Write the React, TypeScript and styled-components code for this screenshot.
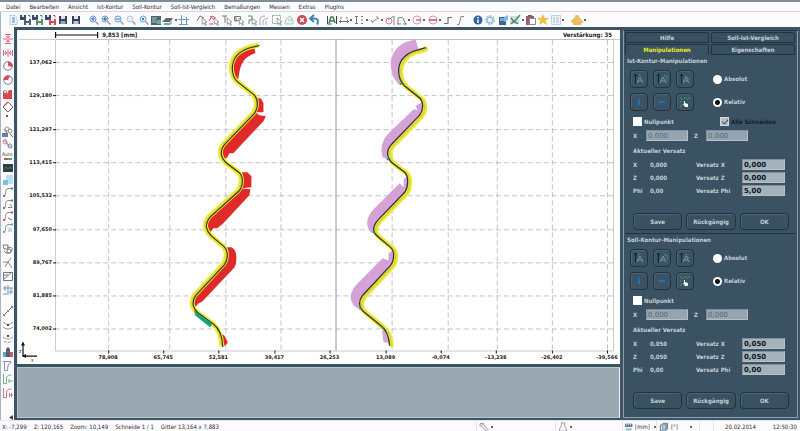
import React, { ReactNode } from "react";
import styled, { createGlobalStyle } from "styled-components";

const slate = "#3d5464";
const slateDark = "#1f3442";

const GlobalStyle = createGlobalStyle`
  * { box-sizing: border-box; }
  body {
    margin: 0;
    font-family: "DejaVu Sans Condensed", "DejaVu Sans", sans-serif;
    font-size: 6px;
    color: #2c2c30;
  }
  button, input { font: inherit; color: inherit; margin: 0; padding: 0; }
`;

const Window = styled.div`
  display: flex;
  flex-direction: column;
  min-height: 100vh;
  background: #fbfbfd;
`;

const MenuBar = styled.nav`
  display: flex;
  align-items: center;
  gap: 9px;
  height: 12px;
  padding: 0 6px;
  border-top: 2px solid #7f8d9b;
  border-bottom: 1px solid #d5d6dc;
  flex: none;
`;

const MenuItem = styled.button`
  border: 0;
  background: none;
  line-height: 8px;
`;

const ToolBar = styled.div`
  display: flex;
  align-items: center;
  gap: 6px;
  height: 15px;
  padding: 0 6px;
  border-left: 1px solid #a9b3c4;
  flex: none;
`;

const ToolGroup = styled.div<{ $w: number }>`
  display: flex;
  align-items: center;
  justify-content: space-between;
  width: ${(p) => p.$w}px;
  position: relative;
  & + &::before {
    content: "";
    position: absolute;
    left: -3px;
    height: 9px;
    border-left: 1px solid #dcdde3;
  }
`;

const IconButton = styled.button`
  display: flex;
  width: 12px;
  height: 12px;
  border: 0;
  background: none;
  opacity: 0.88;
  flex: none;
`;

const Dot = styled.span`
  width: 3px;
  &::after {
    content: "";
    display: block;
    width: 2px;
    height: 2px;
    border-radius: 1px;
    background: #333;
  }
`;

const Body = styled.div`
  display: grid;
  grid-template-columns: 14px minmax(0, 1fr) 178px;
  flex: 1;
`;

const SideBar = styled.div`
  display: flex;
  flex-direction: column;
  align-items: center;
  gap: 9px;
  padding-top: 6px;
  border-left: 1px solid #a9b3c4;
`;

const SideGroup = styled.div<{ $h: number }>`
  display: flex;
  flex-direction: column;
  align-items: center;
  justify-content: space-between;
  height: ${(p) => p.$h}px;
  position: relative;
  & + &::before {
    content: "";
    position: absolute;
    top: -5px;
    width: 9px;
    border-top: 1px solid #dcdde3;
  }
`;

const SideEnd = styled.div`
  margin: auto 1px 0 auto;
  width: 4px;
  height: 5px;
  display: flex;
`;

const WorkArea = styled.main`
  display: flex;
  flex-direction: column;
  gap: 3px;
  padding: 3px 2px 2px 3px;
  background: ${slate};
`;

const ChartPane = styled.section`
  flex: 1;
  min-height: 200px;
  display: flex;
  background: #fff;
  border-left: 1px solid #e9eef1;
`;

const MessagePane = styled.section`
  height: 51px;
  background: #99a8b0;
  border: 1px solid #b9c5cc;
  border-right-color: #eef2f4;
  flex: none;
`;

const Svg = styled.svg`
  display: block;
  width: 100%;
  height: 100%;
`;

const AxisText = styled.text`
  font: bold 5px "DejaVu Sans", sans-serif;
  fill: #222;
`;

const CaptionText = styled.text`
  font: bold 6px "DejaVu Sans Condensed", "DejaVu Sans", sans-serif;
  fill: #222;
`;

const ControlArea = styled.aside`
  padding: 3px 2px 2px 1px;
  background: ${slate};
  color: #c3d0d8;
  font-weight: bold;
`;

const ControlFrame = styled.div`
  display: flex;
  flex-direction: column;
  height: 100%;
  padding: 1px 2px 0 1px;
  border: 1px solid #8c9ea9;
  border-top-color: ${slateDark};
  background: #3a5261;
`;

const Tabs = styled.div`
  display: grid;
  grid-template-columns: 1fr 1fr;
  gap: 1px 2px;
`;

const Tab = styled.button<{ $active?: boolean }>`
  height: 11px;
  line-height: 8px;
  border: 1px solid ${slateDark};
  border-bottom-color: ${(p) => (p.$active ? "transparent" : slateDark)};
  border-radius: 2px 2px 0 0;
  background: ${(p) => (p.$active ? "#3a5261" : "#395060")};
  color: ${(p) => (p.$active ? "#e8ec1e" : "#c3d0d8")};
  font-weight: bold;
`;

const Section = styled.section`
  display: flex;
  flex-direction: column;
  padding: 0 6px 3px 8px;
  & + & {
    border-top: 1px solid ${slateDark};
    padding-bottom: 2px;
  }
`;

const SectionTitle = styled.h2`
  margin: 0 0 4px -6px;
  font-size: 6px;
  line-height: 11px;
`;

const ModeRow = styled.div`
  display: flex;
  align-items: center;
  gap: 5px;
  margin: 0 0 5px -3px;
`;

const PadButton = styled.button`
  display: flex;
  align-items: center;
  justify-content: center;
  width: 18px;
  height: 18px;
  padding: 2px;
  border: 1px solid ${slateDark};
  border-radius: 4px;
  background: #3b5362;
  box-shadow: inset 1px 1px 0 #4d6575;
`;

const RadioLabel = styled.label`
  display: flex;
  align-items: center;
  gap: 2px;
  margin-left: 14px;
  line-height: 8px;
`;

const Radio = styled.input`
  appearance: none;
  width: 9px;
  height: 9px;
  border-radius: 50%;
  background: #fff;
  &:checked { background: radial-gradient(circle, #111 0 2px, #fff 3px); }
`;

const CheckRow = styled.div`
  display: grid;
  grid-template-columns: 87px 1fr;
  height: 10px;
  margin-bottom: 4px;
`;

const CheckLabel = styled.label<{ $muted?: boolean }>`
  display: flex;
  align-items: center;
  gap: 2px;
  white-space: nowrap;
  color: ${(p) => (p.$muted ? "#14222c" : "#c3d0d8")};
`;

const Check = styled.input`
  appearance: none;
  width: 9px;
  height: 9px;
  background: #fff;
  &:disabled { background: #b4c0c8; border: 1px solid #d3dbe0; }
  &:checked::after {
    content: "";
    display: block;
    width: 3px;
    height: 5px;
    margin: 0 0 0 2px;
    border: solid #41525e;
    border-width: 0 1px 1px 0;
    transform: rotate(40deg);
  }
`;

const PointRow = styled.div`
  display: grid;
  grid-template-columns: 13px 42px 6px 12px 42px;
  align-items: center;
  margin-bottom: 5px;
  label:nth-of-type(2) { grid-column: 4; }
`;

const Field = styled.input`
  width: 100%;
  height: 11px;
  padding-left: 1px;
  border: 1px solid #b5c1c8;
  border-top-color: #7f909b;
  border-left-color: #7f909b;
  border-radius: 0;
  background: #a3b2bb;
  color: #10161a;
  font-family: "DejaVu Sans", sans-serif;
  font-size: 7px;
  font-weight: bold;
  line-height: 9px;
  &:disabled {
    color: #566772;
    background: #95a5af;
    font-weight: normal;
  }
`;

const Heading = styled.h3`
  margin: 0 0 3px;
  font-size: 6px;
  line-height: 10px;
`;

const OffsetRows = styled.div`
  display: grid;
  grid-template-columns: 17px 46px 46px 43px;
  row-gap: 2px;
  align-items: center;
  line-height: 11px;
  margin-bottom: 17px;
`;

const Actions = styled.div`
  display: grid;
  grid-template-columns: repeat(3, 1fr);
  gap: 4px;
`;

const ActionButton = styled.button`
  height: 17px;
  border: 1px solid ${slateDark};
  border-radius: 4px;
  background: #3a5160;
  box-shadow: inset 1px 1px 0 #4d6575;
  font-weight: bold;
`;

const StatusBar = styled.footer`
  display: flex;
  align-items: center;
  height: 14px;
  padding: 0 3px 0 2px;
  border-top: 1px solid #e3e6ea;
  line-height: 8px;
  white-space: pre;
  flex: none;
`;

const Readouts = styled.div`
  display: flex;
  gap: 7px;
  flex: 1;
`;

const StatusCell = styled.div<{ $w: number }>`
  display: flex;
  align-items: center;
  gap: 2px;
  width: ${(p) => p.$w}px;
  height: 100%;
  border-left: 1px solid #e4e4ea;
  padding-left: 2px;
`;

const StatusText = styled.span<{ $w: number }>`
  width: ${(p) => p.$w}px;
  text-align: right;
`;

const StatusIcon = styled.span`
  display: flex;
  width: 10px;
  height: 10px;
`;

const disk = (tint: string) => (
  <>
    <path d="M2 2h8v8H2z" fill="#1c2740" />
    <path d="M4 2h4v3H4z" fill="#dbe3ee" />
    <path d="M3.500 7h5v3h-5z" fill={tint} />
  </>
);
const smallDisk = (tint: string, arrow: string) => (
  <>
    <path d="M0 1h6v5H0z" fill="#26324a" />
    <path d="M2 1h2v2H2z" fill="#dfe7f0" />
    <path d="M4 5h7v6H4z" fill={tint} />
    <path d="M6 5h3v2H6zM6 9h3v2H6z" fill="#eef2f7" />
    <path d="M8 1.500h2v2" fill="none" stroke={arrow} />
  </>
);
const lens = (mark: ReactNode, tint = "#5b93cf") => (
  <>
    <circle cx="5" cy="5" r="3" fill="#e3effa" stroke={tint} />
    <path d="M7.500 7.500l3 3" stroke="#9a8aa0" strokeWidth="1.500" />
    {mark}
  </>
);
const cursor = (extra: ReactNode) => (
  <>
    {extra}
    <path d="M6 4l5 4-2 .4 1.400 2.600-1.200.4L8 9l-1.600 1.400z" fill="#fff" stroke="#666" strokeWidth=".7" />
  </>
);
const curve = (end: string, extra?: ReactNode) => (
  <>
    <path d="M1.500 10.500C5 10 2 3 6 2.500h4" fill="none" stroke="#77808b" />
    <path d="M1 9h2v2H1zM9 1.500h2v2H9z" fill={end} />
    {extra}
  </>
);

const icons: Record<string, ReactNode> = {
  Neu: (
    <>
      <path d="M3 1.500h5l2 2v7H3z" fill="#eaf4fc" stroke="#86b8dc" strokeDasharray="2 1" />
      <path d="M5 4h3M5 6h3M5 8h3" stroke="#3f7fb5" />
    </>
  ),
  Laden: smallDisk("#33506c", "#2a8c4a"),
  Importieren: smallDisk("#3a8a5c", "#2a8c4a"),
  Exportieren: smallDisk("#c03a48", "#c03a48"),
  Speichern: disk("#8696ac"),
  "Speichern unter": disk("#b3c2d6"),
  Vollbild: lens(<path d="M3 5h4M5 3v4" stroke="#2566a8" />),
  Vergrößern: lens(<path d="M3 5h4M5 3v4" stroke="#173f72" />),
  Verkleinern: lens(<path d="M3 5h4" stroke="#2566a8" />),
  Lupe: lens(null, "#a8bfd5"),
  Ausschnitt: lens(<path d="M4 4h2v2H4z" fill="#2566a8" />),
  Raster: (
    <>
      <path d="M1 2h10v9H1z" fill="#34515b" />
      <path d="M2 4h5M2 6h4M2 8h6" stroke="#96c3bd" />
      <path d="M7 6h4v4H7z" fill="#5d9aa0" />
    </>
  ),
  Ebene: (
    <>
      <path d="M0 8l4-4h7L8 8z" fill="#45535b" />
      <path d="M2 9h6l2-2v2l-2 2H2z" fill="#63a18c" />
    </>
  ),
  Achsen: <path d="M0 5.500h11M3.500 1v10M8.500 3v8M1 10.500h9" fill="none" stroke="#5d87b4" />,
  "Punkt wählen": cursor(<path d="M1 7l3-5 4 2" fill="none" stroke="#666" />),
  "Punkt löschen": cursor(<path d="M1 7l3-5 4 2M1 10h4M2 2l6 5" fill="none" stroke="#d3374d" />),
  "Linie wählen": cursor(<path d="M1 2h5M4 2v7" fill="none" stroke="#666" />),
  "Bereich wählen": cursor(<path d="M1.500 2.500h6v4h-6zM3 3v5" fill="none" stroke="#666" />),
  "Kontur wählen": cursor(<path d="M2 2h4v4H3v4" fill="none" stroke="#2d8a67" />),
  "Bogen wählen": <path d="M2 11V6q0-4 5-4M5 11V7q0-2 5-3M8 11V7" fill="none" stroke="#9aa6b3" />,
  Rahmen: cursor(<path d="M1.500 1.500h8v8h-8z" fill="none" stroke="#719e8c" strokeDasharray="2 1" />),
  Vieleck: <path d="M2 9l1-4 4-3 3 4v4H2zM5 6h4" fill="#e4f2e8" stroke="#9cc4ae" />,
  Abbrechen: (
    <>
      <circle cx="6" cy="6" r="5" fill="#bf3340" />
      <path d="M4 4l4 4M8 4l-4 4" stroke="#fff" strokeWidth="1.500" />
    </>
  ),
  Rückgängig: <path d="M9 10.500q3-6-3-6H3M6 1L2 4.500 6 8" fill="none" stroke="#2b73ad" strokeWidth="2" />,
  Beschriftung: (
    <>
      <path d="M1.500 2v8h4" fill="none" stroke="#23304c" />
      <path d="M3 9l2-6h2l2 6M4 7h4" fill="none" stroke="#2f6e3d" strokeWidth="1.500" />
      <path d="M10.500 2v8" stroke="#222" />
    </>
  ),
  Horizontal: <path d="M2 4h2M8 4h2M1 7.500h10M2.500 6v3M9.500 6v3" fill="none" stroke="#666" />,
  Vertikal: <path d="M2 2.500h3M2 9.500h3M3.500 3v6M8 2.500h2M8 9.500h2M9 5v2" fill="none" stroke="#666" />,
  Schräg: <path d="M2 6l2 3M7.500 2l2 3M3 8l6-4" fill="none" stroke="#777" />,
  Winkel: (
    <>
      <circle cx="5" cy="7" r="3" fill="none" stroke="#d66a75" />
      <path d="M4 6l6-4v9" fill="none" stroke="#777" />
    </>
  ),
  Winkelmaß: <path d="M2 10V4q6-2 6 3M1 10h4M8 7l2 3M7 10h4" fill="none" stroke="#6c6870" />,
  Radius: (
    <>
      <circle cx="6" cy="6" r="4" fill="none" stroke="#d98d95" />
      <path d="M5 6h5" stroke="#444" />
    </>
  ),
  Durchmesser: (
    <>
      <circle cx="6" cy="6" r="4" fill="none" stroke="#d98d95" />
      <path d="M2 6h8" stroke="#b63d4c" strokeWidth="1.500" />
    </>
  ),
  Stufe: <path d="M2 9.500h4v-6h4" fill="none" stroke="#666" strokeWidth="1.200" />,
  Steigung: <path d="M3 10.500h2l2-8h3" fill="none" stroke="#777" />,
  Info: (
    <>
      <circle cx="6" cy="6" r="4.500" fill="#164f92" />
      <path d="M6 3v1.500M6 5.500V9" stroke="#fff" strokeWidth="1.500" />
    </>
  ),
  Optionen: (
    <>
      <circle cx="6" cy="6" r="4" fill="none" stroke="#9fc5dc" strokeWidth="2" strokeDasharray="2 1" />
      <circle cx="6" cy="6" r="3" fill="#e8f3fa" stroke="#6fa6c7" />
    </>
  ),
  Datenbank: (
    <>
      <path d="M2 3h7v8H2z" fill="#244f88" />
      <path d="M3 4h4v3H3z" fill="#5f9bd0" />
      <path d="M7 3l4-2v5l-4 2z" fill="#6bb3df" />
    </>
  ),
  Prüfen: (
    <>
      <path d="M1 2h9v8H1z" fill="#bfe0da" />
      <path d="M2 4l3 4 6-7M2 10l3-3 4 3" fill="none" stroke="#3b6c60" strokeWidth="1.300" />
    </>
  ),
  Protokoll: (
    <>
      <path d="M1 2h8v9H1z" fill="#914853" />
      <path d="M3 1h4v2H3z" fill="#555" />
      <path d="M4.500 4.500h6v6h-6z" fill="#fff" stroke="#778" />
    </>
  ),
  Favorit: <path d="M6 0l1.700 4H12L8.600 6.800 10 11 6 8.500 2 11l1.400-4.200L0 4h4.300z" fill="#f0b52b" />,
  Liste: (
    <>
      <path d="M1.500 1.500h9v9h-9z" fill="#edf3fb" stroke="#b9cbe3" />
      <path d="M3 4h2M3 6h2M3 8h2M6 4h3M6 6h3M6 8h3" stroke="#9fb4d0" />
    </>
  ),
  Zusatzmodul: <path d="M2 4h2q-1-3 2-3t2 3h2v2q2 0 2 2t-2 1v2H2V9q-2 0-2-2t2-1z" fill="#e8b550" />,

  "Vertikal spiegeln": <path d="M1 6h10M3 1.500h6M3 10.500h6M6 1v4M6 7v4M4 3l2 2 2-2M4 9l2-2 2 2" fill="none" stroke="#d8566a" />,
  "Horizontal spiegeln": <path d="M6 2v8M1.500 3v6M10.500 3v6M1 6h4M7 6h4M3 4l2 2-2 2M9 4L7 6l2 2" fill="none" stroke="#d8566a" />,
  "Sektor rechts": (
    <>
      <circle cx="6" cy="6" r="4.300" fill="#fff" stroke="#66667a" />
      <path d="M6 6V1.500A4.500 4.500 0 0 1 10.500 7z" fill="#d93648" />
    </>
  ),
  "Sektor links": (
    <>
      <circle cx="6" cy="6" r="4.300" fill="#fff" stroke="#66667a" />
      <path d="M6 6H1.500A4.500 4.500 0 0 1 8 2z" fill="#d93648" />
    </>
  ),
  Fläche: (
    <>
      <path d="M1 3h3l1 3 2-4h3v9H1z" fill="#d42c3a" />
      <circle cx="3" cy="4" r="1.500" fill="#fff" stroke="#333" strokeWidth=".6" />
    </>
  ),
  Drehen: (
    <>
      <path d="M1 6l5-5 5 5-5 5z" fill="#fff" stroke="#555" />
      <path d="M2 5l4-4" stroke="#d93648" strokeWidth="1.500" />
    </>
  ),
  "Kontur suchen": (
    <>
      <path d="M0 7h6v4H0z" fill="#4a6fa8" />
      <circle cx="5" cy="3" r="2" fill="none" stroke="#b38a45" />
      <circle cx="8" cy="5" r="2" fill="none" stroke="#777" />
      <path d="M8 8l3 3M2 3l3 4" stroke="#555" />
    </>
  ),
  "Kontur verbinden": (
    <>
      <path d="M1 2l9 8M3 1l4 8" stroke="#a27db0" />
      <circle cx="3" cy="4" r="2" fill="none" stroke="#c97597" />
      <circle cx="8" cy="8" r="2" fill="none" stroke="#6c7db4" />
    </>
  ),
  Auto: (
    <>
      <text x="0" y="6" fontSize="5" fill="#222">Auto</text>
      <path d="M2 9h4" stroke="#bd3944" strokeWidth="2" />
      <path d="M6 9h4" stroke="#3d9f49" strokeWidth="2" />
    </>
  ),
  Anzeige: (
    <>
      <path d="M1 2h10v8H1z" fill="#17262c" />
      <path d="M2 7l2-2 2 2 2-2 2 2" fill="none" stroke="#256e50" />
    </>
  ),
  Objekt: (
    <>
      <path d="M4 1h7v9H4z" fill="#b4dbf2" />
      <path d="M1 6h5v5H1z" fill="#74b4e0" />
    </>
  ),
  "Kurve A": curve("#666"),
  "Kurve B": curve("#666", <path d="M6 9.500h4M8 6l2 3" fill="none" stroke="#777" />),
  "Kurve C": curve("#c33a4c", <path d="M6 8l4 2" stroke="#c33a4c" />),
  "Kurve D": curve("#4aa6c4", <path d="M6 7h4M6 9h4" stroke="#6fb5bc" />),
  Lasso: (
    <>
      <path d="M1 2h5v4H2zM5 5q6-2 5 2t-6 3l-2-2" fill="none" stroke="#666" />
      <circle cx="7" cy="8" r="2" fill="none" stroke="#666" />
    </>
  ),
  Trimmen: <path d="M1 5h5l4 6M6 5l3-4M3 10l3-5" fill="none" stroke="#957077" />,
  Diagonale: <path d="M1.500 2.500h9v8h-9zM1 10l9-8M1 5h5" fill="none" stroke="#5d637c" />,
  Ausrichten: <path d="M1 4h10M1 10h6M3 2v5M6 1v6M9 4v6M5 8h6" fill="none" stroke="#6184ac" />,
  Linie: (
    <>
      <path d="M1 11L11 1" stroke="#555" />
      <path d="M1 9h2v2H1zM5 5h2v2H5zM9 1h2v2H9z" fill="#5b8e68" />
    </>
  ),
  "Bogen außen": (
    <>
      <path d="M1 3q5 5 10 0M1 8q5 4 10 0" fill="none" stroke="#888" />
      <path d="M5 5h2v2H5z" fill="#333" />
    </>
  ),
  "Bogen innen": (
    <>
      <path d="M1 5q5 4 10 0M2 9q4 3 8 0" fill="none" stroke="#888" strokeDasharray="3 1" />
      <path d="M5 3h2v2H5z" fill="#333" />
    </>
  ),
  Statistik: (
    <>
      <path d="M1 6h3v5H1z" fill="#3ea3b2" />
      <path d="M4 3l2-2 2 2v8H4z" fill="#4a4668" />
      <path d="M8 6h3v5H8z" fill="#c74759" />
    </>
  ),
  "Profil A": <path d="M2.500 1v9.500h3q0-8 4-8M1 1.500h8" fill="none" stroke="#7380b6" />,
  "Profil B": <path d="M1.500 1v9.500h3V4q1-2 5-2M7 8h4M7 6v4" fill="none" stroke="#62a679" />,
  "Profil C": <path d="M1.500 1v9.500h3V4q1-2 5-2M7 8h4M7.500 6v4M9.500 6v4" fill="none" stroke="#c26375" />,
};

const Glyph = ({ children }: { children: ReactNode }) => (
  <Svg viewBox="0 0 12 12" aria-hidden="true">{children}</Svg>
);

const Tool = ({ name }: { name: string }) =>
  name === "." ? <Dot /> : (
    <IconButton aria-label={name}><Glyph>{icons[name]}</Glyph></IconButton>
  );

const menus = ["Datei", "Bearbeiten", "Ansicht", "Ist-Kontur", "Soll-Kontur", "Soll-Ist-Vergleich", "Bemaßungen", "Messen", "Extras", "PlugIns"];

const toolGroups: [number, string[]][] = [
  [75, ["Neu", "Laden", "Importieren", "Exportieren", "Speichern", "Speichern unter"]],
  [102, ["Vollbild", "Vergrößern", "Verkleinern", "Lupe", "Ausschnitt", "Raster", "Ebene", ".", "Achsen"]],
  [124, ["Punkt wählen", "Punkt löschen", "Linie wählen", "Bereich wählen", "Kontur wählen", "Bogen wählen", "Rahmen", "Vieleck", "Abbrechen", "Rückgängig"]],
  [140, ["Beschriftung", "Horizontal", ".", "Vertikal", ".", "Schräg", ".", "Winkel", "Winkelmaß", ".", "Radius", ".", "Durchmesser", ".", "Stufe", "Steigung"]],
  [93, ["Info", "Optionen", "Datenbank", "Prüfen", ".", "Protokoll", "Favorit", "Liste", "."]],
  [16, ["Zusatzmodul", "."]],
];

const sideGroups: [number, string[]][] = [
  [84, ["Vertikal spiegeln", "Horizontal spiegeln", "Sektor rechts", "Sektor links", "Fläche", "Drehen", "."]],
  [108, ["Kontur suchen", "Kontur verbinden", "Auto", "Anzeige", "Objekt", "Kurve A", "Kurve B", "Kurve C"]],
  [66, ["Kurve D", "Lasso", "Trimmen", "Diagonale", "Ausrichten"]],
  [94, ["Linie", "Bogen außen", "Bogen innen", "Statistik", "Profil A", "Profil B", "Profil C"]],
];

const sideLayout: [number, string[]][] = [
  sideGroups[0],
  [108, [...sideGroups[1][1], sideGroups[2][1][0]]],
  [53, sideGroups[2][1].slice(1)],
  sideGroups[3],
];

const yTicks: [number, string][] = [
  [62, "137,062"], [95, "129,180"], [129, "121,297"], [162, "113,415"], [195, "105,532"],
  [229, "97,650"], [262, "89,767"], [295, "81,885"], [328, "74,002"],
];
const xTicks: [number, string][] = [
  [109, "78,908"], [164, "65,745"], [219, "52,581"], [275, "39,417"], [330, "26,253"],
  [386, "13,089"], [441, "-0,074"], [496, "-13,238"], [552, "-26,402"], [607, "-39,566"],
];
const gridX = [109, 170, 226, 281, 392, 448, 497, 552, 607];

const istPath =
  "M259 45L249 47.500Q232 53 232 68Q232 76 237 81L254 94.500Q257 98 257 103Q257 109 254 113L226 142Q221 147 221 152Q221 158 227 163L239 172Q242 175 242 180Q242 186 239 190L210 216Q206 221 206 226Q207 231 211 235L224 246Q227 249 227 255Q227 260 224 264L196 294Q192 299 193 304Q194 309 198 312L213 323Q222 330 222.500 346";
const sollPath =
  "M426 47.500L414 51Q399 57 399 71Q399 80 405 86L419 97Q423 100 423 106Q423 111 420 115L392 144Q388 149 388 153Q388 159 393 163L405 172Q408 175 408 181Q408 188 405 192L378 220Q374 225 374 229Q374 233 379 237L391 247Q394 250 394 255Q394 261 391 265L363 295Q360 299 360 303Q360 308 365 312L381 325Q389 331 390 345";

const deviationIst = [
  "M237 80Q232 74 232 67Q234 50 252 46.500L255 48L256 53Q246 56 242 65Q240 70 239 79Z",
  "M257 97L262 99L264 103V112H256Z",
  "M256 112L260 115L266.500 116L264 121L234 153H230L228 157L224 160L221 152L224 144Z",
  "M242 172H248L252 176V187L242 188Z",
  "M242 188L251 189L250 195L224 223L218 228H214L211 232L208 233L206 226L209 218Z",
  "M227 247H232Q237 249 237 258Q237 264 235 267L203 301L199 303L195 308L192 302L195 295L227 262Z",
  "M220 332L225 335L228.500 342L226 345H222Z",
];
const deviationSoll = [
  "M416 39.500L419 50Q399 55 399 70Q399 79 402 84L399 84Q391 76 391 63Q393 43 416 39.500Z",
  "M423 102L416 106L418 110L414 109L388 134Q379 144 383 157L389 159L388 152L422 113Z",
  "M408 176L404 179V187L400 183L374 209Q363 221 371 232L375 233L374 226L408 190Z",
  "M394 250L389 253V260L383 258L357 284Q347 295 354 305L361 310L360 300L394 264Z",
  "M382 327L384 342H390L388 334Z",
];

const Chart = () => (
  <Svg viewBox="19 30 601 333" role="img" aria-label="Ist-Kontur und Soll-Kontur">
    <path d="M56.500 39.500H613.500V350.500H56.500Z" fill="none" stroke="#a9b4b8" strokeWidth=".7" />
    <path d="M20 39.500H620" stroke="#b4bfc2" strokeWidth=".7" />
    <g stroke="#b4b4ba" strokeWidth=".8" strokeDasharray="5 3">
      {yTicks.map(([y]) => <path key={y} d={`M56 ${y}.500H613`} />)}
      {gridX.map((x) => <path key={x} d={`M${x}.500 40V350`} />)}
    </g>
    <path d="M336.500 39V350" stroke="#8f8fc8" />
    <path d="M56.500 35H98.500M56.500 32V38M98.500 32V38" stroke="#111" strokeWidth="1.200" />
    <CaptionText x="103" y="37">9,853 [mm]</CaptionText>
    <CaptionText x="612" y="37" textAnchor="end">Verstärkung: 35</CaptionText>
    {yTicks.map(([y, t]) => (
      <g key={t}>
        <AxisText x="53" y={y + 2} textAnchor="end">{t}</AxisText>
        <path d={`M54 ${y}.500H57`} stroke="#111" />
      </g>
    ))}
    {xTicks.map(([x, t]) => (
      <g key={t}>
        <AxisText x={x} y="358" textAnchor="middle">{t}</AxisText>
        <path d={`M${x}.500 350V353`} stroke="#111" />
      </g>
    ))}
    <path d="M24 343V355.500H38" fill="none" stroke="#111" strokeWidth="1.200" />
    <path d="M22 345L24 341L26 345ZM27 353.500L23 355.500L27 357.500Z" fill="#111" />
    <text x="20" y="352" fontSize="4">Z</text>
    <text x="32" y="361" fontSize="4">X</text>

    <g fill="#e02a2a">{deviationIst.map((d) => <path key={d} d={d} />)}</g>
    <path d={istPath} fill="none" stroke="#efe92c" strokeWidth="5" strokeLinejoin="round" />
    <path d={istPath} fill="none" stroke="#c9cc50" strokeWidth="1.200" />
    <path d={istPath} fill="none" stroke="#33331f" strokeWidth="1.100" transform="translate(1 0.500)" />
    <path d="M195 310L213 323L211 327L196 315Z" fill="#18a080" />
    <g fill="#d4a2d6">{deviationSoll.map((d) => <path key={d} d={d} />)}</g>
    <path d={sollPath} fill="none" stroke="#efe92c" strokeWidth="5" strokeLinejoin="round" transform="translate(2 1)" />
    <path d={sollPath} fill="none" stroke="#c9cc50" strokeWidth="1" transform="translate(2 1)" />
    <path d={sollPath} fill="none" stroke="#35304c" strokeWidth="1.300" />
    <path d="M400 83h2v2h-2zM387 158h2v2h-2zM373 231h2v2h-2zM360 307h2v2h-2zM382 326h2v2h-2z" fill="#35a06a" />
  </Svg>
);

const padAxes = (tail: string) => (
  <>
    <path d="M2.500 1V10.500M1 3L2.500 1L4 3" fill="none" stroke="#16232c" />
    <path d="M4 10L7 4L10 10M5 8H9" fill="none" stroke="#7396aa" />
    <path d={tail} fill="none" stroke="#2a9678" />
  </>
);
const padIcons: [string, ReactNode][] = [
  ["Verschieben Z", padAxes("M5 2H8")],
  ["Verschieben X", padAxes("M8 3H11V8")],
  ["Verschieben frei", padAxes("M6 2L11 7")],
  ["Kippen", <path key="k" d="M5 3H7V9H5Z" fill="#1774c4" />],
  ["Strecken", <path key="s" d="M3 5H9V7H3Z" fill="#1774c4" />],
  ["Ziehen", (
    <React.Fragment key="z">
      <path d="M1 1L4 4M11 1L8 4M1 11L4 8M5 2H8M2 5V7" stroke="#329a6c" />
      <path d="M5 5H6V7L9 8V11H6L4 8H5Z" fill="#f2f5f7" />
    </React.Fragment>
  )],
];

interface SectionProps { id: string; title: string; all?: boolean; x: string; phi: string }

const ContourSection = ({ id, title, all, x, phi }: SectionProps) => (
  <Section>
    <SectionTitle>{title}</SectionTitle>
    {["Absolut", "Relativ"].map((mode, row) => (
      <ModeRow key={mode}>
        {padIcons.slice(row * 3, row * 3 + 3).map(([name, g]) => (
          <PadButton key={name} aria-label={name}><Glyph>{g}</Glyph></PadButton>
        ))}
        <RadioLabel><Radio type="radio" name={id} defaultChecked={row === 1} />{mode}</RadioLabel>
      </ModeRow>
    ))}
    <CheckRow>
      <CheckLabel><Check type="checkbox" />Nullpunkt</CheckLabel>
      {all && <CheckLabel $muted><Check type="checkbox" defaultChecked disabled />Alle Schneiden</CheckLabel>}
    </CheckRow>
    <PointRow>
      <label htmlFor={`${id}-px`}>X</label>
      <Field id={`${id}-px`} defaultValue="0,000" disabled />
      <label htmlFor={`${id}-pz`}>Z</label>
      <Field id={`${id}-pz`} defaultValue="0,000" disabled />
    </PointRow>
    <Heading>Aktueller Versatz</Heading>
    <OffsetRows>
      {[["X", x], ["Z", x], ["Phi", "0,00"]].map(([axis, value]) => (
        <React.Fragment key={axis}>
          <span>{axis}</span>
          <span>{value}</span>
          <label htmlFor={`${id}-v${axis}`}>Versatz {axis}</label>
          <Field id={`${id}-v${axis}`} defaultValue={axis === "Phi" ? phi : x} />
        </React.Fragment>
      ))}
    </OffsetRows>
    <Actions>
      <ActionButton>Save</ActionButton>
      <ActionButton>Rückgängig</ActionButton>
      <ActionButton>OK</ActionButton>
    </Actions>
  </Section>
);

export default function App() {
  return (
    <Window>
      <GlobalStyle />
      <MenuBar>{menus.map((m) => <MenuItem key={m}>{m}</MenuItem>)}</MenuBar>
      <ToolBar>
        {toolGroups.map(([w, names]) => (
          <ToolGroup key={names[0]} $w={w}>{names.map((n, i) => <Tool key={i} name={n} />)}</ToolGroup>
        ))}
      </ToolBar>
      <Body>
        <SideBar>
          {sideLayout.map(([h, names]) => (
            <SideGroup key={names[0]} $h={h}>{names.map((n, i) => <Tool key={i} name={n} />)}</SideGroup>
          ))}
          <SideEnd><Svg viewBox="0 0 4 5"><path d="M4 0V5L0 2.500Z" fill="#444" /></Svg></SideEnd>
        </SideBar>
        <WorkArea>
          <ChartPane><Chart /></ChartPane>
          <MessagePane />
        </WorkArea>
        <ControlArea>
          <ControlFrame>
            <Tabs>
              <Tab>Hilfe</Tab>
              <Tab>Soll-Ist-Vergleich</Tab>
              <Tab $active>Manipulationen</Tab>
              <Tab>Eigenschaften</Tab>
            </Tabs>
            <ContourSection id="ist" title="Ist-Kontur-Manipulationen" all x="0,000" phi="5,00" />
            <ContourSection id="soll" title="Soll-Kontur-Manipulationen" x="0,050" phi="0,00" />
          </ControlFrame>
        </ControlArea>
      </Body>
      <StatusBar>
        <Readouts>
          <span>X: -7,299</span>
          <span>Z: 120,165</span>
          <span>Zoom: 10,149</span>
          <span>Schneide 1 / 1</span>
          <span>Gitter 13,164 x 7,883</span>
        </Readouts>
        <StatusCell $w={79}>
          <StatusIcon><Glyph><path d="M2 1L1 4L4 6L9 11L11 9L6 4L5 1L4 3Z" fill="#f2f2f4" stroke="#888" /></Glyph></StatusIcon><Dot />
        </StatusCell>
        <StatusCell $w={67}>
          <StatusIcon><Glyph><path d="M4 1H8V5L10 8V11H2V8L4 5Z" fill="#fafafa" stroke="#888" /></Glyph></StatusIcon><Dot />
        </StatusCell>
        <StatusCell $w={34}>
          <StatusIcon><Glyph><path d="M0 1H11V6H0Z" fill="#5c7896" /><path d="M2 1V4M5 1V4M8 1V4" stroke="#fff" /><path d="M1 8H10V11H1Z" fill="#a5b4c4" /></Glyph></StatusIcon>[mm] <Dot />
        </StatusCell>
        <StatusCell $w={43}>
          <StatusIcon><Glyph><path d="M1 4L5 1H11V8L8 11H1Z" fill="#7c93a8" /><path d="M3 4V10M5 3V10M7 3V10" stroke="#dfe8ef" /></Glyph></StatusIcon>[°]      <Dot />
        </StatusCell>
        <StatusCell $w={14} />
        <StatusCell $w={1} />
        <StatusText $w={40}>20.02.2014</StatusText>
        <StatusText $w={41}>12:50:30</StatusText>
      </StatusBar>
    </Window>
  );
}
